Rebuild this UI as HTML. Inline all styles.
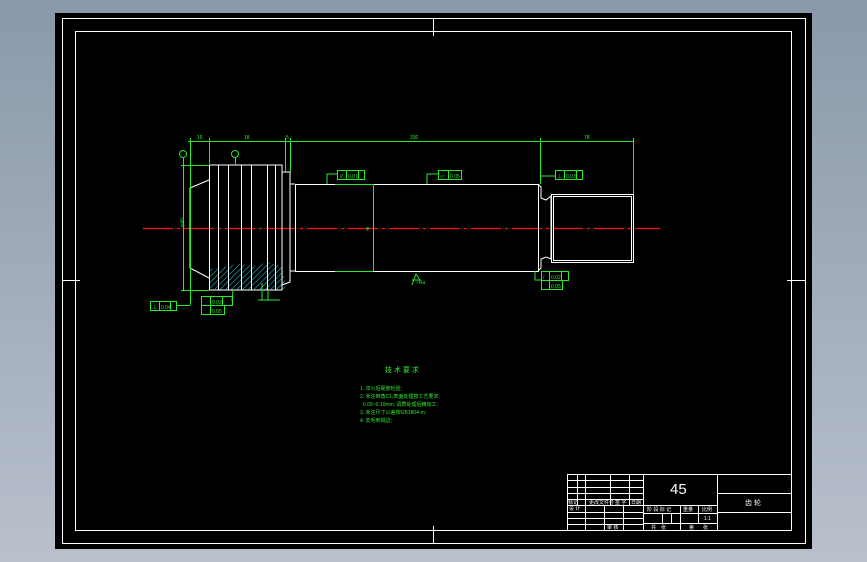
<!DOCTYPE html>
<html><head><meta charset="utf-8"><style>
html,body{margin:0;padding:0;width:867px;height:562px;overflow:hidden;background:#8b9aab}
svg{display:block}
text{font-family:"Liberation Sans","Noto Sans CJK SC",sans-serif}
</style></head><body>
<svg width="867" height="562" viewBox="0 0 867 562" xmlns="http://www.w3.org/2000/svg">
<defs>
<linearGradient id="bg" x1="0" y1="0" x2="0" y2="1"><stop offset="0" stop-color="#8a99aa"/><stop offset="1" stop-color="#b9c0cc"/></linearGradient>
<pattern id="h" width="4" height="4" patternUnits="userSpaceOnUse" patternTransform="rotate(45)"><line x1="0" y1="0" x2="0" y2="4" stroke="#2ad0e0" stroke-width="1"/></pattern>
</defs>
<rect width="867" height="562" fill="url(#bg)"/>
<rect x="55" y="13" width="757" height="536" fill="#000"/>
<g fill="none" stroke="#fff" stroke-width="1">
<rect x="62.5" y="18.5" width="743" height="525"/>
<rect x="75.5" y="31.5" width="716" height="499"/>
<line x1="433.5" y1="18" x2="433.5" y2="36"/><line x1="433.5" y1="526" x2="433.5" y2="544"/>
<line x1="62" y1="280.5" x2="80" y2="280.5"/><line x1="787" y1="280.5" x2="806" y2="280.5"/>
</g>
<!-- centerline -->
<line x1="143" y1="228.5" x2="660" y2="228.5" stroke="#ff1010" stroke-width="1.3" stroke-dasharray="30,4,3,4"/>
<!-- hatch -->
<path d="M209,269 L222,267 L240,264 L255,266 L268,262 L282,266 L285,282 L285,290 L209,290Z" fill="url(#h)"/>
<!-- shaft white -->
<g fill="none" stroke="#fff" stroke-width="1">
<path d="M209,165 L282,165 L282,290 L209,290"/>
<path d="M209,180 L190,188 L190,268 L209,278"/>
<line x1="209.5" y1="165" x2="209.5" y2="290"/>
<line x1="218.5" y1="165" x2="218.5" y2="290"/><line x1="228.5" y1="165" x2="228.5" y2="290"/>
<line x1="241.5" y1="165" x2="241.5" y2="290"/><line x1="251.5" y1="165" x2="251.5" y2="290"/>
<line x1="267.5" y1="165" x2="267.5" y2="290"/><line x1="275.5" y1="165" x2="275.5" y2="290"/>
<path d="M282,172 L290,172 L290,282 L282,285"/>
<path d="M290,184 L295,184"/><path d="M290,271 L295,271"/>
<rect x="295.5" y="184.5" width="243" height="87"/>
<path d="M538,184 L541,187 L541,198 L546,200 L551,196 L551,259 L546,257 L541,259 L541,268 L538,271"/>
<rect x="551.5" y="194.5" width="82" height="68"/>
<rect x="553.5" y="196.5" width="78" height="64"/>
</g>
<!-- green dims -->
<g fill="none" stroke="#2be82b" stroke-width="1">
<line x1="188" y1="141.5" x2="634" y2="141.5"/>
<line x1="190.5" y1="138" x2="190.5" y2="305"/><line x1="209.5" y1="138" x2="209.5" y2="165"/>
<line x1="285.5" y1="138" x2="285.5" y2="172"/><line x1="290.5" y1="138" x2="290.5" y2="172"/>
<line x1="540.5" y1="138" x2="540.5" y2="184"/><line x1="633.5" y1="138" x2="633.5" y2="194"/>
<line x1="183.5" y1="165" x2="183.5" y2="290"/><line x1="181" y1="165.5" x2="209" y2="165.5"/><line x1="181" y1="290.5" x2="209" y2="290.5"/>
<line x1="373.5" y1="184" x2="373.5" y2="271"/>
<line x1="335" y1="184.5" x2="373" y2="184.5"/><line x1="335" y1="271.5" x2="373" y2="271.5"/>
<circle cx="183" cy="154" r="3.5"/><line x1="183.5" y1="158" x2="183.5" y2="165"/>
<circle cx="235" cy="154" r="3.5"/><line x1="235.5" y1="158" x2="235.5" y2="165"/>
<!-- feature frames -->
<path d="M327,184 L327,174 L337,174"/><rect x="337.5" y="170.5" width="27" height="9"/><line x1="346.5" y1="170" x2="346.5" y2="179"/><line x1="358.5" y1="170" x2="358.5" y2="179"/>
<path d="M427,184 L427,174 L438,174"/><rect x="438.5" y="170.5" width="23" height="9"/><line x1="448.5" y1="170" x2="448.5" y2="179"/>
<path d="M541,176 L555,176"/><rect x="555.5" y="170.5" width="27" height="9"/><line x1="564.5" y1="170" x2="564.5" y2="179"/><line x1="576.5" y1="170" x2="576.5" y2="179"/>
<path d="M535,271 L535,280 L541,280"/><rect x="541.5" y="271.5" width="27" height="9"/><line x1="549.5" y1="271" x2="549.5" y2="289"/><line x1="561.5" y1="271" x2="561.5" y2="281"/><rect x="541.5" y="280.5" width="21" height="9"/>
<rect x="150.5" y="301.5" width="26" height="9"/><line x1="159.5" y1="301" x2="159.5" y2="310"/><line x1="170.5" y1="301" x2="170.5" y2="310"/><line x1="176" y1="305.5" x2="190" y2="305.5"/>
<rect x="201.5" y="296.5" width="31" height="9"/><line x1="210.5" y1="296" x2="210.5" y2="314"/><line x1="222.5" y1="296" x2="222.5" y2="305"/><rect x="201.5" y="305.5" width="23" height="9"/>
<path d="M232,301 L233,290"/>
<path d="M262,283 L262,300 M258,300 L280,300 M268,290 L268,300"/>
<path d="M416,274 L412,285 M416,274 L420,280 L412,280"/>
</g>
<g fill="#2be82b" font-size="5">
<text x="197" y="139">15</text><text x="244" y="139">18</text><text x="286" y="139">5</text><text x="410" y="139">330</text><text x="584" y="139">78</text>
<text x="340" y="178">//</text><text x="348" y="178">0.01</text><text x="440" y="178">▱</text><text x="450" y="178">0.05</text>
<text x="557" y="178">⊥</text><text x="566" y="178">0.03</text><text x="543" y="279">/</text><text x="551" y="279">0.02</text><text x="551" y="288">0.05</text>
<text x="152" y="309">⊥</text><text x="161" y="309">0.04</text><text x="212" y="304">0.03</text><text x="212" y="313">0.05</text>
<text x="366" y="230">φ</text><text x="177" y="232" transform="rotate(-90 178 226)">φ40</text>
<text x="416" y="284">√Ra</text>
<text x="385" y="372" font-size="7">技 术 要 求</text>
<text x="360" y="390" font-size="5">1. 淬火后硬度检验;</text>
<text x="360" y="398" font-size="5">2. 未注倒角C1,表面处理按工艺要求;</text>
<text x="363" y="406" font-size="5">0.05~0.10mm, 调质处理后精加工;</text>
<text x="360" y="414" font-size="5">3. 未注尺寸公差按GB1804-m;</text>
<text x="360" y="422" font-size="5">4. 去毛刺锐边;</text>
</g>
<!-- title block -->
<g fill="none" stroke="#fff" stroke-width="1">
<rect x="567.5" y="474.5" width="224" height="56"/>
<line x1="643.5" y1="474" x2="643.5" y2="530"/><line x1="717.5" y1="474" x2="717.5" y2="530"/>
<line x1="717" y1="493.5" x2="792" y2="493.5"/><line x1="717" y1="512.5" x2="792" y2="512.5"/>
<line x1="643" y1="505.5" x2="717" y2="505.5"/><line x1="643" y1="523.5" x2="717" y2="523.5"/><line x1="643" y1="513.5" x2="717" y2="513.5"/>
<line x1="662.5" y1="513" x2="662.5" y2="523"/><line x1="671.5" y1="513" x2="671.5" y2="523"/><line x1="680.5" y1="505" x2="680.5" y2="530"/><line x1="698.5" y1="505" x2="698.5" y2="523"/>
<line x1="567" y1="480.5" x2="643" y2="480.5"/><line x1="567" y1="487.5" x2="643" y2="487.5"/><line x1="567" y1="493.5" x2="643" y2="493.5"/><line x1="567" y1="499.5" x2="643" y2="499.5"/><line x1="567" y1="505.5" x2="643" y2="505.5"/><line x1="567" y1="512.5" x2="643" y2="512.5"/><line x1="567" y1="518.5" x2="643" y2="518.5"/><line x1="567" y1="524.5" x2="643" y2="524.5"/>
<line x1="577.5" y1="474" x2="577.5" y2="505"/><line x1="585.5" y1="474" x2="585.5" y2="505"/><line x1="610.5" y1="474" x2="610.5" y2="505"/><line x1="629.5" y1="474" x2="629.5" y2="505"/>
<line x1="585.5" y1="505" x2="585.5" y2="530"/><line x1="604.5" y1="505" x2="604.5" y2="530"/><line x1="623.5" y1="505" x2="623.5" y2="530"/>
</g>
<g fill="#fff" font-size="5">
<text x="670" y="494" font-size="15">45</text>
<text x="745" y="505" font-size="7">齿 轮</text>
<text x="568" y="504">标记</text><text x="589" y="504">更改文件号</text><text x="615" y="504">签 字</text><text x="631" y="504">日期</text>
<text x="569" y="510">设 计</text><text x="607" y="529">审 核</text>
<text x="647" y="511">阶 段 标 记</text><text x="683" y="511">重量</text><text x="702" y="511">比例</text><text x="704" y="520">1:1</text>
<text x="651" y="529">共</text><text x="661" y="529">张</text><text x="689" y="529">第</text><text x="703" y="529">张</text>
</g>
</svg>
</body></html>
